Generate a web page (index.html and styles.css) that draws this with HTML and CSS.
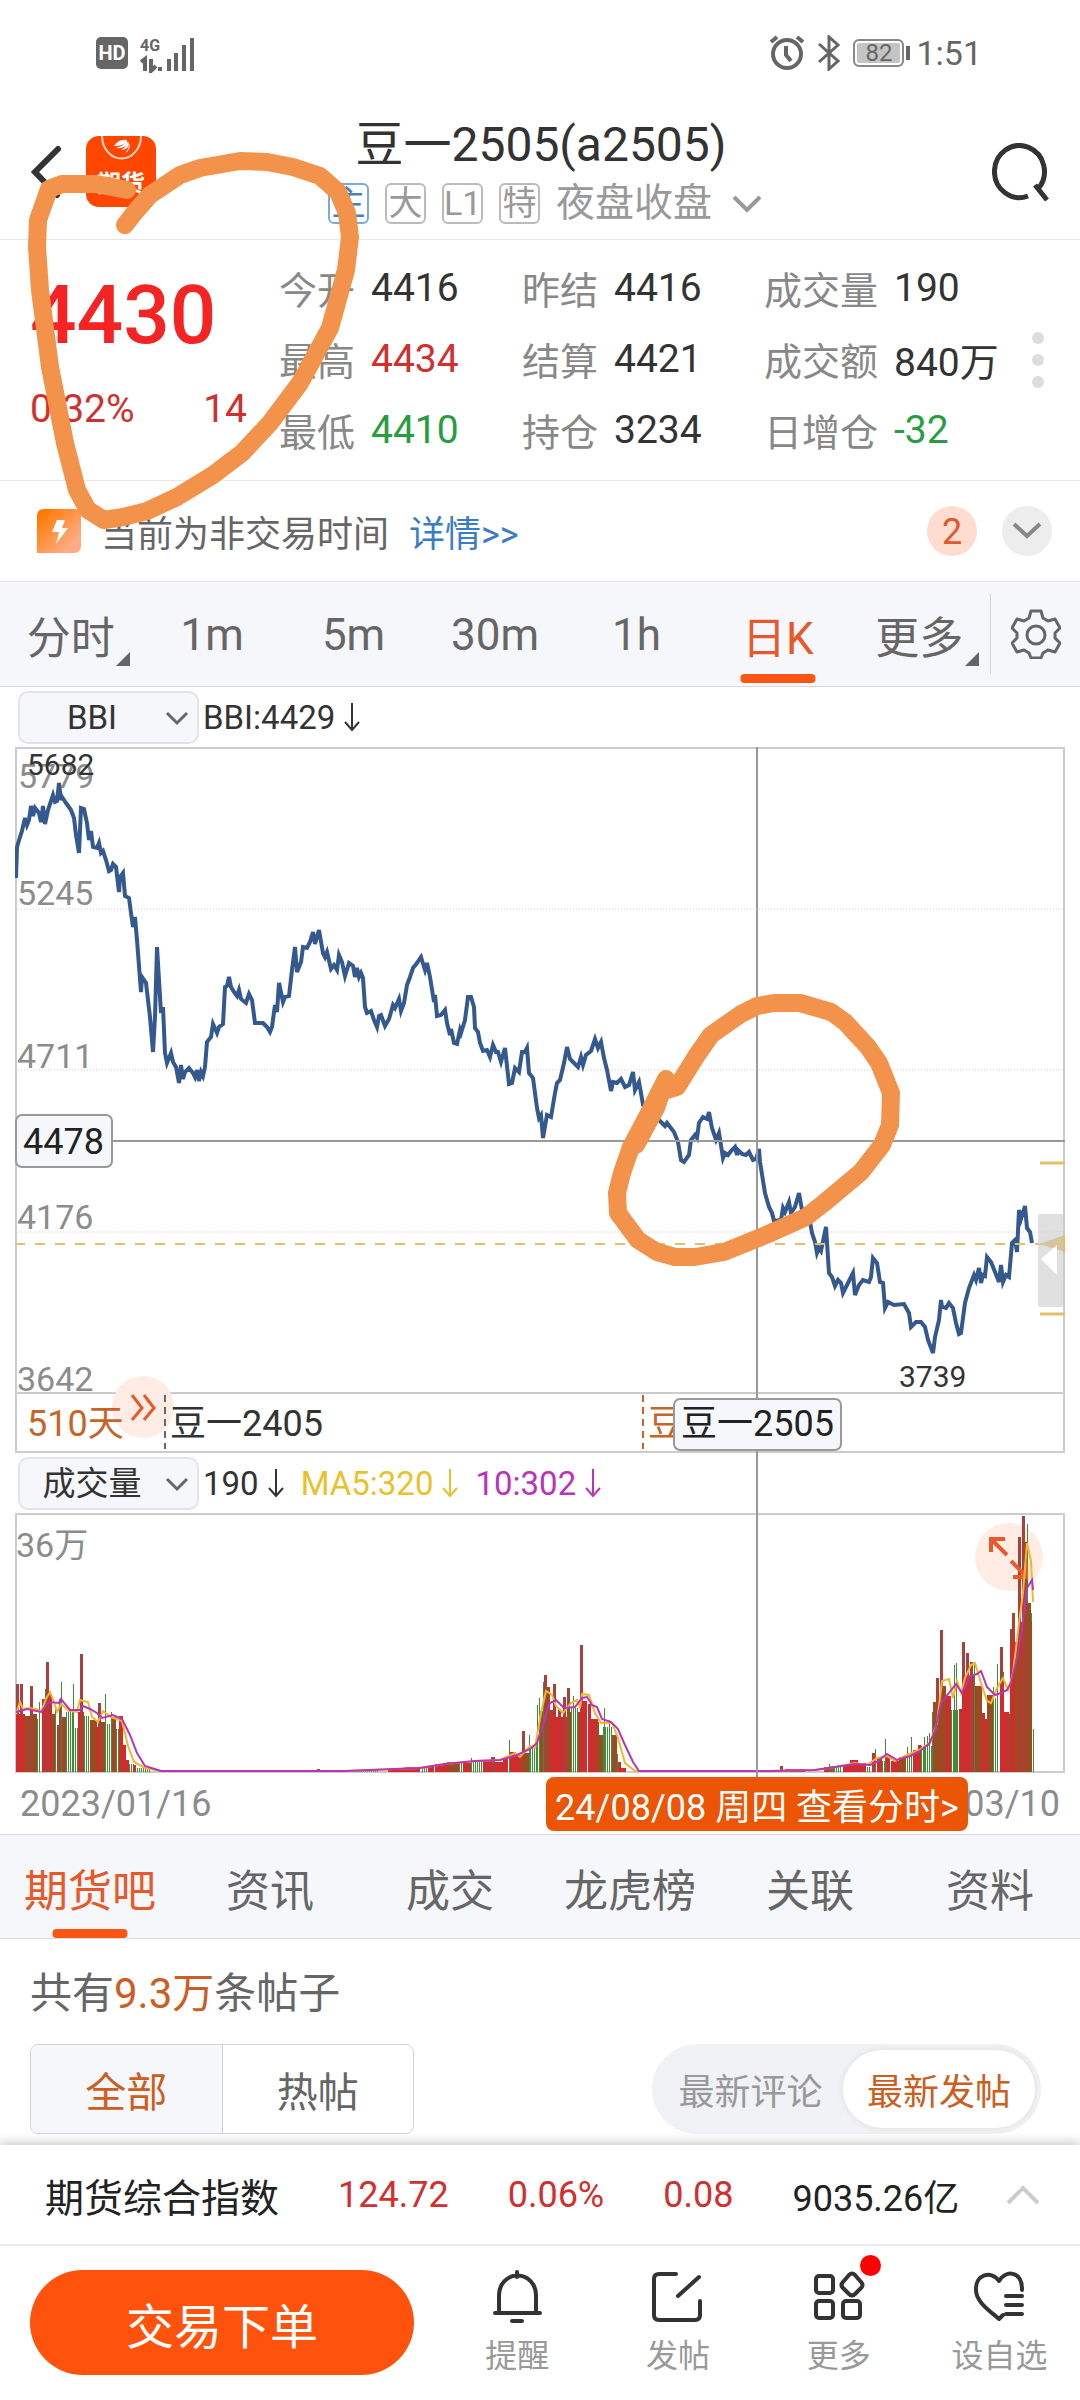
FILE: index.html
```html
<!DOCTYPE html>
<html lang="zh-CN">

<head>
    <meta charset="UTF-8">
    <meta name="viewport" content="width=device-width, initial-scale=1.0">
    <title>豆一2505</title>
    <link rel="stylesheet" href="styles.css">
</head>

<body>
    <div class="status">
        <div class="status-left">
            <span class="hd">HD</span>
            <svg width="56" height="40" viewBox="0 -4 56 40">
                <text x="0" y="14" class="net">4G</text>
                <g stroke="#666" stroke-width="4" fill="none">
                    <path d="M1 25l4-3v12M11 22v12l5-5M20 30v4M29 22v12M36 16v18M44 8v26M52 1v33" />
                </g>
            </svg>
        </div>
        <div class="status-right">
            <svg width="36" height="36" viewBox="0 0 36 36" fill="none" stroke="#666" stroke-width="4">
                <circle cx="18" cy="19" r="14" />
                <path d="M17 11v9l5 6M2 7l6-5M34 7l-6-5" />
            </svg>
            <svg width="24" height="36" viewBox="0 0 24 36" fill="none" stroke="#666" stroke-width="3">
                <path d="M2 9l19 17-9 8V2l9 8L2 27" />
            </svg>
            <span class="battery">82</span>
            <span class="clock">1:51</span>
        </div>
    </div>

    <header class="header">
        <div class="header-left">
            <button class="icon-btn" aria-label="返回">
                <svg width="32" height="54" viewBox="0 0 32 54" fill="none" stroke="#333" stroke-width="6"
                    stroke-linecap="round">
                    <path d="M28 4L5 27l22 23" />
                </svg>
            </button>
            <svg class="logo" width="70" height="71" viewBox="0 0 70 71">
                <rect width="70" height="71" rx="13" fill="#ff4600" />
                <path d="M16 0a19 22 0 0 0 39 0" fill="none" stroke="#ffd9c8" stroke-width="2" />
                <path d="M28 10C31 5 36 3 41 4c-1 4-6 6-13 6zM30 12c4-1 8-3 11-7 1 4-3 8-11 7zM35 14c4-2 6-5 7-9 2 5-1 9-7 9zM39 17c3-3 4-6 4-10 2 4 0 8-4 10z" fill="#fff" />
                <text x="35" y="56" class="logo-text">期货</text>
            </svg>
        </div>
        <div class="header-mid">
            <h1>豆一2505(a2505)</h1>
            <div class="tags">
                <span class="tag tag-main">主</span>
                <span class="tag">大</span>
                <span class="tag">L1</span>
                <span class="tag">特</span>
                <span class="session">夜盘收盘</span>
                <svg width="30" height="20" viewBox="0 0 30 20" fill="none" stroke="#999" stroke-width="4">
                    <path d="M2 3l13 13L28 3" />
                </svg>
            </div>
        </div>
        <button class="icon-btn search" aria-label="搜索">
            <svg width="60" height="58" viewBox="0 0 60 58" fill="none" stroke="#333" stroke-width="5">
                <path d="M36 53A25 26 0 1 1 46 46M43 42l12 15" />
            </svg>
        </button>
    </header>

    <section class="quote">
        <div class="price">
            <strong>4430</strong>
            <div class="change"><span>0.32%</span><span>14</span></div>
        </div>
        <dl class="stats">
            <div><dt>今开</dt><dd>4416</dd></div>
            <div><dt>昨结</dt><dd>4416</dd></div>
            <div><dt>成交量</dt><dd>190</dd></div>
            <div><dt>最高</dt><dd class="up">4434</dd></div>
            <div><dt>结算</dt><dd>4421</dd></div>
            <div><dt>成交额</dt><dd>840万</dd></div>
            <div><dt>最低</dt><dd class="down">4410</dd></div>
            <div><dt>持仓</dt><dd>3234</dd></div>
            <div><dt>日增仓</dt><dd class="down">-32</dd></div>
        </dl>
        <button class="dots" aria-label="更多行情"><i></i><i></i><i></i></button>
    </section>

    <section class="notice">
        <svg width="44" height="44" viewBox="0 0 44 44">
            <defs>
                <linearGradient id="flash" x1="0" y1="0" x2="1" y2="1">
                    <stop offset="0.1" stop-color="#ff7a00" />
                    <stop offset="0.8" stop-color="#ffab85" />
                </linearGradient>
            </defs>
            <path d="M7 0h31q6 0 6 7v30q0 7-7 7H0V7q0-7 7-7z" fill="url(#flash)" />
            <path d="M20 11h8l-3 8h6L19 35l3-12h-7z" fill="#fff" />
        </svg>
        <span>当前为非交易时间</span>
        <a href="#">详情&gt;&gt;</a>
        <span class="count">2</span>
        <button class="fold" aria-label="展开">
            <svg width="30" height="20" viewBox="0 0 30 20" fill="none" stroke="#888" stroke-width="4">
                <path d="M2 3l13 12L28 3" />
            </svg>
        </button>
    </section>

    <nav class="period">
        <div class="period-list">
            <button class="corner">分时</button>
            <button>1m</button>
            <button>5m</button>
            <button>30m</button>
            <button>1h</button>
            <button class="active">日K</button>
            <button class="corner">更多</button>
        </div>
        <button class="setting" aria-label="设置">
            <svg width="50" height="50" viewBox="0 0 50 50" fill="none" stroke="#666" stroke-width="3"
                stroke-linejoin="round">
                <path d="M20 2h10l2 7 5 3 7-2 5 9-5 5v5l5 5-5 9-7-2-5 3-2 5H20l-2-5-5-3-7 2-5-9 5-5v-5l-5-5 5-9 7 2 5-3z" />
                <circle cx="25" cy="26" r="9" />
            </svg>
        </button>
    </nav>

    <main class="charts">
        <div class="indicator">
            <label class="pick">
                <select aria-label="主图指标"><option>BBI</option></select>
                <svg width="24" height="16" viewBox="0 0 24 16" fill="none" stroke="#666" stroke-width="3"><path d="M2 2l10 10L22 2" /></svg>
            </label>
            <span class="ind">BBI:4429<svg class="arrow" viewBox="0 0 18 30"><path d="M9 1v26M2 20l7 8 7-8" /></svg></span>
        </div>

        <svg class="kline" viewBox="0 0 1050 706">
            <g fill="none" stroke="#ccc" stroke-width="2">
                <rect x="1" y="1" width="1048" height="704" />
                <path d="M0 646H1050" />
                <path d="M0 162H1050M0 323H1050M0 485H1050" stroke-width="1" stroke-dasharray="1 2" />
            </g>
            <g class="axis">
                <text x="3" y="41">5779</text>
                <text x="2" y="158">5245</text>
                <text x="2" y="321">4711</text>
                <text x="2" y="482">4176</text>
                <text x="2" y="644">3642</text>
            </g>
            <polyline id="price" fill="none" stroke="#34598f" stroke-width="4" />
            <g class="peak">
                <text x="12" y="28">5682</text>
                <text x="884" y="640">3739</text>
            </g>
            <path d="M0 497H1050" stroke="#dfc268" stroke-width="2" stroke-dasharray="10 10" />
            <path d="M1025 416h25M1025 567h25" stroke="#dfc268" stroke-width="3" />
            <path d="M1024 497l26-9v17z" fill="#e5b95c" />
            <rect x="1023" y="467" width="25" height="93" rx="2" fill="#ccc" fill-opacity="0.6" />
            <path d="M1026 512l16-14v30z" fill="#fff" />
            <path d="M0 394H1050" stroke="#999" stroke-width="2" />
            <g class="box">
                <rect x="1" y="368" width="96" height="52" rx="6" />
                <text x="8" y="407">4478</text>
            </g>
            <!-- 合约换月 -->
            <circle cx="128" cy="660" r="31" fill="#ffece5" />
            <g class="contract">
                <text x="12" y="689" fill="#c8642b">510天</text>
                <text x="155" y="689" fill="#333">豆一2405</text>
                <text x="633" y="689" fill="#c8642b">豆一2505</text>
            </g>
            <path d="M117 648l10 13-10 12M129 648l10 13-10 12" fill="none" stroke="#e8592b" stroke-width="3" />
            <path d="M150 648V702" stroke="#666" stroke-width="2" stroke-dasharray="7 5" />
            <path d="M628 648V702" stroke="#c8642b" stroke-width="2" stroke-dasharray="7 5" />
        </svg>

        <div class="indicator">
            <label class="pick">
                <select aria-label="副图指标"><option>成交量</option></select>
                <svg width="24" height="16" viewBox="0 0 24 16" fill="none" stroke="#666" stroke-width="3"><path d="M2 2l10 10L22 2" /></svg>
            </label>
            <span class="ind">190<svg class="arrow" viewBox="0 0 18 30"><path d="M9 1v26M2 20l7 8 7-8" /></svg></span>
            <span class="ind ma5">MA5:320<svg class="arrow" viewBox="0 0 18 30"><path d="M9 1v26M2 20l7 8 7-8" /></svg></span>
            <span class="ind ma10">10:302<svg class="arrow" viewBox="0 0 18 30"><path d="M9 1v26M2 20l7 8 7-8" /></svg></span>
        </div>

        <svg class="volume" viewBox="0 0 1050 260">
            <rect x="1" y="1" width="1048" height="258" fill="none" stroke="#ccc" stroke-width="2" />
            <g class="axis"><text x="1" y="44">36万</text></g>
            <circle cx="994" cy="44" r="34" fill="#ffece5" />
            <g id="bars"></g>
            <g fill="none" stroke="#e8592b" stroke-width="4">
                <path d="M992 42l-15-15M976 39V26h14M996 48l15 15M998 64h13V50" />
            </g>
            <polyline id="ma5" fill="none" stroke="#f3b52e" stroke-width="2" />
            <polyline id="ma10" fill="none" stroke="#b935b4" stroke-width="2" />
        </svg>

        <div class="dates"><span>2023/01/16</span><span>03/10</span></div>

        <div class="cross"></div>
        <svg class="cross-tip" viewBox="0 0 1050 706">
            <g class="box">
                <rect x="659" y="652" width="167" height="51" rx="6" />
                <text x="666" y="689">豆一2505</text>
            </g>
        </svg>
        <button class="day-tip">24/08/08 周四 查看分时&gt;</button>
    </main>

    <nav class="tabs">
        <button class="active">期货吧</button>
        <button>资讯</button>
        <button>成交</button>
        <button>龙虎榜</button>
        <button>关联</button>
        <button>资料</button>
    </nav>

    <section class="posts">
        <p>共有<em>9.3万</em>条帖子</p>
        <div class="filters">
            <div class="seg">
                <button class="active">全部</button>
                <button>热帖</button>
            </div>
            <div class="pill">
                <button>最新评论</button>
                <button class="active">最新发帖</button>
            </div>
        </div>
    </section>

    <section class="index">
        <span>期货综合指数</span>
        <span class="up">124.72</span>
        <span class="up">0.06%</span>
        <span class="up">0.08</span>
        <span>9035.26亿</span>
        <svg width="34" height="20" viewBox="0 0 34 20" fill="none" stroke="#ccc" stroke-width="4">
            <path d="M2 18L17 3l15 15" />
        </svg>
    </section>

    <footer class="bottom">
        <button class="order">交易下单</button>
        <div class="actions">
            <button>
                <svg viewBox="0 0 54 54">
                    <path d="M9 42V25a18 19 0 0 1 37 0v17M27 7V2M5 43h45M22 51h10" />
                </svg>
                提醒
            </button>
            <button>
                <svg viewBox="0 0 54 54">
                    <path d="M25 4H8q-5 0-5 5v36q0 5 5 5h36q5 0 5-5V31M48 7L27 26" />
                </svg>
                发帖
            </button>
            <button>
                <svg viewBox="0 0 54 54">
                    <rect x="4" y="6" width="17" height="17" rx="3" />
                    <rect x="4" y="31" width="17" height="17" rx="3" />
                    <rect x="31" y="31" width="17" height="17" rx="3" />
                    <path d="M37 5q3-3 6 0l6 7q3 3 0 6l-6 6q-3 3-6 0l-6-6q-3-3 0-6z" />
                </svg>
                <i class="red-dot"></i>
                更多
            </button>
            <button>
                <svg viewBox="0 0 54 54">
                    <path d="M49 20C49 0 32 0 26 11 19 0 2 4 3 20c0 12 14 21 23 29l4-4M33 26h16M33 35h16M33 44h16" />
                </svg>
                设自选
            </button>
        </div>
    </footer>

    <!-- 手绘标记 -->
    <svg class="marks" viewBox="0 0 1080 1300">
        <path d="M127 190L97 184 62 184 49 189 38 220 37 247 40 290 50 367 65 443 77 490 88 510 104 520 123 517 147 511 177 497 213 475 242 453 270 423 300 383 330 328 346 270 350 237 347 213 338 192 320 176 293 167 267 162 240 161 200 168 180 175 150 195 135 212 125 225" />
        <path d="M636 1145L656 1108 666 1079 664 1091 677 1087 697 1055 711 1035 741 1014 757 1006 774 1003 800 1003 831 1012 845 1022 868 1047 879 1063 891 1093 890 1125 882 1145 861 1172 824 1203 806 1217 766 1235 724 1252 695 1257 675 1257 657 1252 638 1240 618 1213 617 1193 622 1173 631 1147 649 1113 666 1079" />
    </svg>

    <script>
        let price = `1,131 2,100 5,90 7,84 10,71 12,78 14,73 16,59 18,69 20,61 24,66 26,75 28,59 30,77 33,63 38,48 40,55 42,54 44,36 46,53 47,50 51,56 56,63 59,71 61,88 64,106 66,61 69,62 72,76 74,93 76,84 78,100 82,101 84,96 86,106 88,104 91,113 94,124 96,123 98,117 101,120 104,145 105,130 108,126 110,149 114,151 116,166 118,180 120,170 122,193 126,245 127,230 131,236 135,270 138,305 140,270 142,200 144,233 146,266 148,260 150,306 152,316 156,306 158,315 161,320 164,336 166,318 168,332 170,325 174,321 178,326 180,330 182,323 184,334 186,325 188,329 190,320 192,295 196,290 198,277 202,286 204,280 208,277 210,240 212,239 214,230 216,240 219,245 222,249 224,243 226,252 231,256 234,247 237,253 240,276 248,276 252,280 255,285 257,280 260,258 262,265 264,236 268,255 270,250 274,249 277,223 280,200 282,225 286,215 288,200 292,201 295,195 298,185 300,197 304,183 308,206 310,210 312,205 316,222 319,218 322,223 324,208 327,215 330,229 334,216 338,219 340,230 342,221 344,230 346,226 348,231 350,260 352,266 356,264 359,273 362,280 364,269 366,268 370,279 374,272 378,258 380,261 384,252 386,264 389,256 392,238 395,230 398,221 402,216 406,210 410,223 412,216 415,230 419,255 420,248 422,269 426,268 430,263 432,276 435,288 436,282 439,296 442,297 445,283 446,286 450,273 453,250 456,250 459,260 460,281 463,285 465,296 468,304 472,303 475,310 478,298 481,305 483,305 486,315 490,301 494,337 497,336 500,321 504,325 507,305 510,305 512,301
            514,326 518,331 522,361 524,371 526,368 528,391 532,368 536,370 540,346 542,336 545,333 549,316 552,300 555,312 559,316 563,320 566,310 568,318 571,308 576,304 580,292 583,301 586,295 589,311 592,323 596,344 598,335 602,336 606,332 610,340 614,338 618,325 620,343 624,335 626,346 628,358 637,366 646,375 650,379 652,376 659,385 663,395 666,413 669,415 674,408 676,393 680,388 682,391 684,376 688,370 692,372 694,365 697,381 701,393 704,386 708,411 710,406 713,408 716,404 720,400 722,408 723,403 727,407 731,408 734,405 738,413 741,412 744,402 745,415 750,446 754,460 757,466 759,474 766,473 768,461 770,465 774,455 776,466 780,460 784,446 787,463 795,475 797,486 800,495 802,506 804,501 806,504 811,480 814,526 817,530 820,539 823,533 826,536 828,546 832,538 838,526 840,548 844,538 848,533 854,535 856,530 858,511 862,516 865,535 868,536 870,561 873,555 879,558 889,557 894,566 896,580 901,575 906,575 910,580 913,593 918,606 920,590 924,573 926,553 927,560 931,561 934,556 938,561 941,576 944,587 946,586 950,556 954,541 959,528 961,533 964,521 966,536 968,528 970,529 972,510 976,515 980,525 984,535 986,518 988,535 991,528 994,530 997,496 1000,493 1002,505 1004,463 1006,472 1010,459 1012,481 1015,485 1017,496`
        let ma5 = `1,201 5,189 8,196 14,195 21,196 26,199 31,186 35,179 39,189 42,199 46,191 54,198 62,199 65,187 73,189 77,204 83,209 88,198 96,204 107,208 113,233 119,249 130,255 146,258 330,258 405,255 430,251 460,248 485,247 500,240 505,244 515,233 520,235 526,200 531,178 537,182 541,193 548,200 556,190 562,187 565,195 567,181 574,182 580,200 586,210 597,210 603,225 610,250 620,258 755,258 800,257 820,254 840,250 852,252 862,245 872,243 880,248 892,242 904,237 915,230 922,210 927,168 934,166 938,185 942,168 946,180 950,165 956,152 960,150 966,170 972,188 976,190 982,175 988,165 993,177 998,160 1004,110 1008,80 1012,30 1016,48 1018,89`
        let ma10 = `1,199 12,196 26,199 34,189 44,190 46,186 55,197 65,197 68,193 75,196 82,200 87,205 98,202 107,206 115,222 122,240 130,253 146,258 330,258 405,255 430,251 460,248 485,247 500,243 515,236 522,230 530,205 535,190 541,187 549,195 560,194 567,185 572,184 577,192 582,194 587,206 596,209 603,216 610,232 618,249 624,258 755,258 800,257 820,254 840,251 855,252 862,249 872,241 882,247 895,243 905,238 914,231 920,218 926,190 934,180 941,171 947,180 955,163 962,161 966,158 972,174 980,182 986,180 992,177 996,170 1002,145 1007,115 1012,75 1017,67 1018,77`
        document.querySelector('#price').setAttribute('points', price)
        document.querySelector('#ma5').setAttribute('points', ma5)
        document.querySelector('#ma10').setAttribute('points', ma10)

        // 成交量: 颜色 x 宽 高
        let bars = `d 1 3 88,d 5 3 88,r 1 9 58,b 10 5 56,d 15 3 86,b 18 4 58,g 22 4 53,g 24 1 70,d 27 3 73,g 30 1 83,d 31 3 110,r 27 4 64,r 34 3 78,b 37 4 58,g 40 1 63,d 42 2 47,d 44 3 73,g 46 1 90,b 47 4 55,g 51 8 60,g 58 1 88,g 58 5 44,d 65 3 118,r 63 3 60,b 67 2 60,g 69 6 56,b 75 7 52,d 83 3 69,r 82 4 45,b 86 4 50,g 90 1 78,g 92 4 48,g 96 1 60,b 97 4 55,g 101 3 43,r 104 4 56,r 108 3 27,r 111 3 12,g 114 6 8,r 118 3 7,g 122 14 4,
            r 302 3 3,g 334 30 2,r 373 32 4,r 390 15 5,g 407 6 5,r 413 6 5,r 420 12 8,b 432 12 10,g 444 4 9,r 448 8 9,g 456 1 14,g 456 12 11,r 468 8 12,d 476 4 15,r 480 9 10,r 488 5 14,g 494 1 32,r 495 5 20,r 500 6 17,d 507 3 41,b 506 8 19,g 514 1 37,g 515 6 24,g 521 1 36,g 522 1 67,g 524 1 74,b 525 4 61,g 528 1 90,d 529 3 97,b 532 3 85,r 535 3 62,d 538 3 88,r 538 18 55,r 543 3 63,d 548 3 75,d 552 3 84,b 552 4 60,g 556 7 64,g 558 1 76,b 563 3 60,d 565 3 127,r 565 4 70,r 568 4 71,r 573 3 68,r 576 7 53,b 581 3 50,b 584 4 37,g 589 1 64,g 588 9 45,g 594 1 52,b 597 5 37,g 602 1 18,r 603 3 10,r 606 5 4,
            r 759 8 2,d 765 3 6,r 770 20 3,r 809 11 5,g 814 1 8,g 815 12 6,r 828 8 7,r 835 8 12,r 843 8 9,g 852 4 5,r 857 4 19,g 860 1 23,r 862 5 15,g 867 4 11,g 870 1 33,r 871 4 16,r 876 12 11,b 884 7 15,g 892 1 25,g 892 5 15,g 896 1 35,r 898 5 22,r 903 3 27,g 906 12 26,g 909 1 35,g 912 1 36,g 914 1 39,g 917 1 60,d 918 3 70,d 921 3 94,d 925 3 142,b 918 11 70,b 928 3 86,r 931 5 76,g 936 8 62,g 939 1 107,g 941 1 109,r 944 4 63,d 947 3 130,d 951 3 119,r 947 13 96,d 955 3 110,g 959 1 110,b 960 7 86,r 967 3 59,r 970 2 53,b 972 6 77,g 978 6 74,g 978 1 85,g 982 1 108,d 985 3 125,g 988 1 100,r 985 4 90,r 989 5 60,b 993 2 58,d 995 2 143,d 997 3 159,r 995 6 130,b 1000 3 130,d 1003 3 235,b 1003 4 150,r 1006 4 150,d 1007 3 256,b 1010 3 230,g 1012 1 248,b 1012 4 169,g 1016 1 159,b 1015 2 150,g 1018 1 43`
        let color = { r: '#cf2d2d', b: '#9c4a22', d: '#a8403c', g: '#3d8f35' }
        let html = ''
        bars.split(',').forEach(function (bar) {
            let [type, x, w, h] = bar.trim().split(' ')
            x = Number(x)
            w = Number(w)
            if (type == 'g') {
                for (let i = x; i < x + w; i += 2) {
                    html += `<rect x="${i}" y="${259 - h}" width="1" height="${h}" fill="${color.g}"/>`
                }
            } else {
                html += `<rect x="${x}" y="${259 - h}" width="${w}" height="${h}" fill="${color[type]}"/>`
            }
        })
        document.querySelector('#bars').innerHTML = html
    </script>
</body>

</html>
```
FILE: styles.css
```css
* {
    padding: 0;
    margin: 0;
    box-sizing: border-box;
}

body {
    position: relative;
    font-family: Roboto, "Noto Sans CJK SC", sans-serif;
    font-size: 38px;
    color: #333;
    background-color: #fff;
}

button,
select {
    font-family: inherit;
    font-size: inherit;
    color: inherit;
    border: none;
    background: none;
    cursor: pointer;
}

svg {
    display: block;
    flex-shrink: 0;
}

/* 状态栏 */
.status {
    display: flex;
    justify-content: space-between;
    align-items: center;
    height: 106px;
    padding: 0 98px 0 96px;
    color: #666;
}

.status-left,
.status-right {
    display: flex;
    align-items: center;
    gap: 12px;
}

.hd {
    width: 32px;
    height: 32px;
    line-height: 32px;
    border-radius: 5px;
    background-color: #666;
    color: #fff;
    font-size: 20px;
    font-weight: bold;
    text-align: center;
}

.net {
    font-size: 16px;
    font-weight: bold;
    fill: #666;
}

.battery {
    position: relative;
    width: 51px;
    height: 28px;
    line-height: 24px;
    border: 2px solid #888;
    border-radius: 6px;
    box-shadow: inset 0 0 0 2px #fff;
    background-color: #c4c4c4;
    font-size: 24px;
    text-align: center;
}

.battery::after {
    content: "";
    position: absolute;
    right: -8px;
    top: 5px;
    width: 4px;
    height: 14px;
    background-color: #666;
}

.clock {
    font-size: 34px;
}

/* 头部 */
.header {
    display: grid;
    grid-template-columns: 1fr auto 1fr;
    align-items: center;
    padding: 9px 28px 15px 30px;
    border-bottom: 1px solid #e8e8e8;
}

.header-left {
    display: flex;
    align-items: center;
    gap: 24px;
    padding-top: 4px;
}

.icon-btn svg {
    display: block;
}

.search {
    justify-self: end;
    padding-top: 4px;
}

.logo-text {
    font-size: 24px;
    font-weight: bold;
    fill: #fff;
    text-anchor: middle;
}

.header-mid h1 {
    font-size: 48px;
    font-weight: normal;
    line-height: 60px;
    text-align: center;
}

.tags {
    display: flex;
    align-items: center;
    gap: 16px;
    height: 41px;
    margin-top: 8px;
    padding-left: 8px;
    color: #999;
}

.tag {
    width: 41px;
    height: 41px;
    line-height: 37px;
    border: 2px solid #bbb;
    border-radius: 6px;
    font-size: 34px;
    text-align: center;
}

.tag-main {
    border-color: #7ba9dc;
    color: #4a80c0;
}

.session {
    font-size: 39px;
    line-height: 41px;
}

.tags svg {
    margin-left: 4px;
}

/* 行情 */
.quote {
    display: flex;
    height: 241px;
    padding: 12px 30px 0;
    border-bottom: 1px solid #e8e8e8;
}

.price {
    width: 249px;
    flex-shrink: 0;
    color: #f42424;
}

.price strong {
    display: block;
    padding-top: 15px;
    font-size: 82px;
    font-weight: 500;
    line-height: 96px;
}

.change {
    display: flex;
    justify-content: space-between;
    padding: 22px 32px 0 0;
    font-size: 39px;
    line-height: 48px;
    color: #d03030;
}

.stats {
    flex: 1;
    display: grid;
    grid-template-columns: 243px 242px 1fr;
    grid-auto-rows: 71px;
}

.stats div {
    display: flex;
    align-items: center;
    gap: 16px;
    white-space: nowrap;
}

.stats dt {
    color: #888;
}

.stats dd {
    font-size: 39px;
}

.up {
    color: #d03030;
}

.stats .down {
    color: #289c40;
}

.dots {
    display: flex;
    flex-direction: column;
    gap: 10px;
    align-self: flex-start;
    margin: 80px 6px 0 0;
}

.dots i {
    width: 12px;
    height: 12px;
    border-radius: 50%;
    background-color: #ddd;
}

/* 提示 */
.notice {
    display: flex;
    align-items: center;
    height: 100px;
    padding: 0 28px 0 37px;
    font-size: 36px;
    color: #666;
}

.notice span,
.notice a {
    margin-left: 20px;
}

.notice a {
    color: #3b7cc4;
    text-decoration: none;
}

.notice .count {
    width: 50px;
    height: 50px;
    line-height: 52px;
    margin-left: auto;
    border-radius: 50%;
    background-color: #ffdccf;
    color: #e0592b;
    text-align: center;
}

.fold {
    display: flex;
    align-items: center;
    justify-content: center;
    width: 50px;
    height: 50px;
    margin-left: 25px;
    border-radius: 50%;
    background-color: #ededed;
}

/* 周期 */
.period {
    display: flex;
    align-items: center;
    height: 106px;
    border-top: 1px solid #e4e6ea;
    border-bottom: 1px solid #d4d6da;
    background-color: #f6f7fa;
    color: #666;
    font-size: 44px;
}

.period-list {
    flex: 1;
    display: grid;
    grid-template-columns: repeat(7, 1fr);
    height: 104px;
}

.period-list button,
.tabs button {
    position: relative;
    padding-top: 2px;
}

.corner::after {
    content: "";
    position: absolute;
    right: 11px;
    bottom: 20px;
    border: 7px solid #666;
    border-top-color: transparent;
    border-left-color: transparent;
}

.period .active,
.tabs .active {
    color: #e5592a;
}

.period .active::after,
.tabs .active::after {
    content: "";
    position: absolute;
    left: 50%;
    bottom: 3px;
    width: 75px;
    height: 9px;
    border-radius: 4px;
    background-color: #fc5412;
    transform: translateX(-50%);
}

.tabs .active::after {
    bottom: 0;
}

.setting {
    display: flex;
    align-items: center;
    justify-content: center;
    width: 90px;
    height: 80px;
    border-left: 1px solid #d4d6da;
}

/* 图表 */
.charts {
    position: relative;
    padding: 0 15px;
}

.indicator {
    display: flex;
    align-items: center;
    gap: 16px;
    height: 60px;
    padding-left: 3px;
    font-size: 33px;
}

.pick {
    position: relative;
    margin-right: -12px;
}

.pick select {
    display: block;
    width: 181px;
    height: 53px;
    padding-right: 33px;
    appearance: none;
    border: 2px solid #e2e4ea;
    border-radius: 10px;
    background-color: #f6f7fa;
    text-align-last: center;
}

.pick svg {
    position: absolute;
    right: 10px;
    top: 20px;
}

.ind {
    display: flex;
    align-items: center;
    gap: 8px;
}

.arrow {
    width: 18px;
    height: 30px;
    fill: none;
    stroke: currentColor;
    stroke-width: 2;
}

.ma5 {
    color: #e8c22c;
}

.ma10 {
    color: #bb33bb;
}

.kline,
.volume {
    width: 100%;
}

.axis {
    font-size: 34px;
    fill: #8c8c8c;
}

.peak {
    font-size: 30px;
    fill: #333;
}

.contract {
    font-size: 36px;
}

.box {
    font-size: 36px;
    fill: #222;
}

.box rect {
    fill: #f6f7fa;
    stroke: #999;
    stroke-width: 2;
}

.dates {
    display: flex;
    justify-content: space-between;
    height: 61px;
    padding: 0 5px;
    line-height: 62px;
    font-size: 36px;
    color: #8c8c8c;
}

.cross {
    position: absolute;
    left: 70%;
    top: 60px;
    bottom: 57px;
    width: 2px;
    background-color: #999;
}

.cross-tip {
    position: absolute;
    left: 15px;
    top: 60px;
    width: calc(100% - 30px);
    pointer-events: none;
}

.day-tip {
    position: absolute;
    right: 112px;
    bottom: 3px;
    width: 422px;
    height: 54px;
    border-radius: 8px;
    background-color: #eb5505;
    color: #fff;
    font-size: 36px;
    white-space: nowrap;
}

/* 栏目 */
.tabs {
    display: grid;
    grid-template-columns: repeat(6, 1fr);
    height: 105px;
    border-top: 1px solid #d8dade;
    border-bottom: 1px solid #d8dade;
    background-color: #f6f7fa;
    color: #666;
    font-size: 44px;
}

/* 帖子 */
.posts {
    padding: 24px 30px 0;
    color: #666;
    font-size: 42px;
}

.posts p {
    line-height: 62px;
}

.posts em {
    font-style: normal;
}

.posts em,
.posts .active {
    color: #cb5e20;
}

.filters {
    display: flex;
    justify-content: space-between;
    padding: 19px 9px 11px 0;
}

.seg {
    display: flex;
    width: 384px;
    height: 90px;
    border: 1px solid #d0d2d6;
    border-radius: 8px;
    font-size: 41px;
    overflow: hidden;
}

.seg button {
    flex: 1;
}

.seg .active {
    border-right: 1px solid #d0d2d6;
    background-color: #f6f7fa;
}

.pill {
    display: flex;
    padding: 6px;
    border-radius: 45px;
    background-color: #f1f2f5;
    font-size: 36px;
    color: #999;
}

.pill button {
    width: 185px;
    height: 78px;
    border-radius: 39px;
}

.pill .active {
    width: 192px;
    background-color: #fff;
    box-shadow: 0 0 6px #ddd;
}

/* 指数 */
.index {
    position: relative;
    display: flex;
    align-items: center;
    gap: 59px;
    height: 101px;
    padding: 0 46px 0 45px;
    border-bottom: 2px solid #ececec;
    background-color: #fff;
    box-shadow: 0 -3px 10px #ccc;
    font-size: 36px;
    color: #222;
    white-space: nowrap;
}

.index .up {
    color: #d03030;
}

.index span:first-child {
    font-size: 39px;
}

.index svg {
    margin-left: -12px;
}

/* 底部 */
.bottom {
    position: relative;
    display: flex;
    height: 154px;
    padding: 24px 0 0 30px;
    background-color: #fff;
}

.order {
    width: 384px;
    height: 105px;
    border-radius: 53px;
    background-color: #ff530d;
    color: #fff;
    font-size: 48px;
}

.actions {
    flex: 1;
    display: grid;
    grid-template-columns: repeat(4, 1fr);
    padding-left: 23px;
}

.actions button {
    position: relative;
    display: flex;
    flex-direction: column;
    align-items: center;
    height: 110px;
    font-size: 32px;
    line-height: 40px;
    color: #999;
}

.actions svg {
    width: 54px;
    height: 54px;
    margin-bottom: 12px;
    fill: none;
    stroke: #333;
    stroke-width: 4;
    stroke-linecap: round;
    stroke-linejoin: round;
}

.red-dot {
    position: absolute;
    right: 38px;
    top: -15px;
    width: 21px;
    height: 21px;
    border-radius: 50%;
    background-color: #f00;
}

.marks {
    position: absolute;
    left: 0;
    top: 0;
    width: 100%;
    fill: none;
    stroke: #f2924b;
    stroke-width: 18;
    stroke-linecap: round;
    stroke-linejoin: round;
    pointer-events: none;
}
```
